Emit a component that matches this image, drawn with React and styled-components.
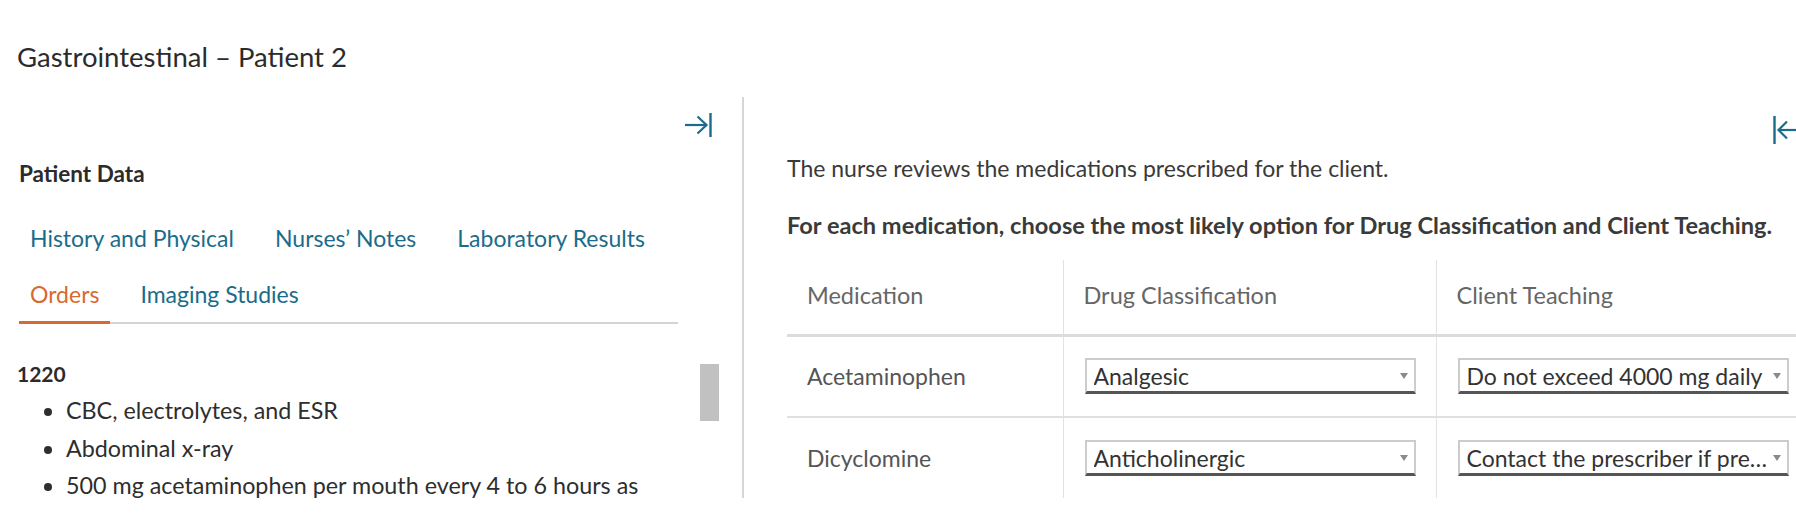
import React from "react";
import styled, { createGlobalStyle } from "styled-components";

const GlobalStyle = createGlobalStyle`
  html, body {
    margin: 0;
    padding: 0;
    background: #ffffff;
  }
  body {
    font-family: Lato, "Open Sans", "Liberation Sans", sans-serif;
    color: #2e2e2e;
  }
  * {
    box-sizing: border-box;
  }
`;

const teal = "#1b6c8b";
const orange = "#d76a2e";

const tabs = [
  { label: "History and Physical" },
  { label: "Nurses\u2019 Notes" },
  { label: "Laboratory Results" },
  { label: "Orders", active: true },
  { label: "Imaging Studies" },
];

const orders = [
  "CBC, electrolytes, and ESR",
  "Abdominal x-ray",
  "500 mg acetaminophen per mouth every 4 to 6 hours as needed for pain",
];

const medications = [
  { name: "Acetaminophen", drug: "Analgesic", teaching: "Do not exceed 4000 mg daily" },
  {
    name: "Dicyclomine",
    drug: "Anticholinergic",
    teaching: "Contact the prescriber if pregnant or breastfeeding",
  },
];

const ExpandIcon = () => (
  <svg width="28" height="26" viewBox="0 0 28 26" fill="none">
    <path d="M1 13 H23" stroke={teal} strokeWidth="2.2" />
    <path d="M13.5 4.5 L22.5 13 L13.5 21.5" stroke={teal} strokeWidth="2.2" />
    <path d="M26.5 1 V25" stroke={teal} strokeWidth="2.4" />
  </svg>
);

const CollapseIcon = () => (
  <svg width="28" height="30" viewBox="0 0 28 30" fill="none">
    <path d="M1.5 1 V29" stroke={teal} strokeWidth="2.4" />
    <path d="M5 15 H28" stroke={teal} strokeWidth="2.2" />
    <path d="M14 6.5 L5.5 15 L14 23.5" stroke={teal} strokeWidth="2.2" />
  </svg>
);

export default function App() {
  return (
    <>
      <GlobalStyle />
      <Page>
        <Title>Gastrointestinal – Patient 2</Title>
        <Columns>
          <LeftPanel>
            <PanelTop>
              <IconButton aria-label="Expand">
                <ExpandIcon />
              </IconButton>
            </PanelTop>
            <SectionTitle>Patient Data</SectionTitle>
            <TabList>
              {tabs.map((t) => (
                <Tab key={t.label} $active={t.active}>
                  {t.label}
                </Tab>
              ))}
            </TabList>
            <OrdersBody>
              <Time>1220</Time>
              <Bullets>
                {orders.map((o) => (
                  <li key={o}>{o}</li>
                ))}
              </Bullets>
            </OrdersBody>
            <ScrollThumb />
          </LeftPanel>

          <RightPanel>
            <PanelTopRight>
              <IconButton aria-label="Collapse">
                <CollapseIcon />
              </IconButton>
            </PanelTopRight>
            <Intro>The nurse reviews the medications prescribed for the client.</Intro>
            <Instruction>
              For each medication, choose the most likely option for Drug Classification and
              Client Teaching.
            </Instruction>
            <MedTable>
              <colgroup>
                <col style={{ width: 276 }} />
                <col style={{ width: 373 }} />
                <col style={{ width: 373 }} />
              </colgroup>
              <thead>
                <tr>
                  <HeadCell>Medication</HeadCell>
                  <HeadCell $divider>Drug Classification</HeadCell>
                  <HeadCell $divider>Client Teaching</HeadCell>
                </tr>
              </thead>
              <tbody>
                {medications.map((m, i) => (
                  <BodyRow key={m.name} $last={i === medications.length - 1}>
                    <NameCell>{m.name}</NameCell>
                    <SelectCell $divider>
                      <SelectBox>
                        <SelectValue>{m.drug}</SelectValue>
                        <Caret />
                      </SelectBox>
                    </SelectCell>
                    <SelectCell $divider>
                      <SelectBox>
                        <SelectValue>{m.teaching}</SelectValue>
                        <Caret />
                      </SelectBox>
                    </SelectCell>
                  </BodyRow>
                ))}
              </tbody>
            </MedTable>
          </RightPanel>
        </Columns>
      </Page>
    </>
  );
}

const Page = styled.div`
  width: 1796px;
  height: 517px;
  overflow: hidden;
`;

const Title = styled.h1`
  margin: 0;
  padding: 42px 0 0 17px;
  font-size: 27.5px;
  line-height: 30px;
  font-weight: 400;
  color: #2b2b2b;
`;

const Columns = styled.div`
  display: grid;
  grid-template-columns: 744px 1fr;
  margin-top: 25px;
`;

const LeftPanel = styled.section`
  position: relative;
  height: 401px;
  border-right: 2px solid #d6d6d6;
  overflow: hidden;
`;

const PanelTop = styled.div`
  display: flex;
  justify-content: flex-end;
  padding: 15px 30px 0 0;
`;

const IconButton = styled.button`
  display: flex;
  padding: 0;
  border: 0;
  background: none;
  cursor: pointer;
`;

const SectionTitle = styled.h2`
  margin: 24px 0 0 19px;
  font-size: 22.5px;
  line-height: 24px;
  font-weight: 700;
  color: #2b2b2b;
`;

const TabList = styled.div`
  display: flex;
  flex-wrap: wrap;
  column-gap: 19px;
  width: 659px;
  margin: 24px 0 0 19px;
  border-bottom: 2px solid #d4d4d4;
`;

const Tab = styled.div`
  padding: 16px 11px 15px;
  font-size: 23px;
  line-height: 24px;
  color: ${(p) => (p.$active ? orange : teal)};
  border-bottom: 3px solid ${(p) => (p.$active ? orange : "transparent")};
  margin-bottom: -2px;
  cursor: pointer;
`;

const OrdersBody = styled.div`
  padding: 37px 40px 0 17px;
`;

const Time = styled.div`
  font-size: 21px;
  line-height: 26px;
  font-weight: 700;
  color: #2b2b2b;
`;

const Bullets = styled.ul`
  margin: 5px 0 0;
  padding-left: 49px;
  font-size: 23.3px;
  line-height: 37.5px;
  color: #2e2e2e;
`;

const ScrollThumb = styled.div`
  position: absolute;
  left: 700px;
  top: 267px;
  width: 19px;
  height: 57px;
  background: #c1c1c1;
`;

const RightPanel = styled.section`
  padding-left: 43px;
  overflow: hidden;
  height: 420px;
`;

const PanelTopRight = styled.div`
  display: flex;
  justify-content: flex-end;
  padding-top: 18px;
  margin-right: -5px;
`;

const Intro = styled.p`
  margin: 9px 0 0;
  font-size: 23px;
  line-height: 28px;
  color: #3a3a3a;
`;

const Instruction = styled.p`
  margin: 29px 0 0;
  font-size: 23.6px;
  line-height: 28px;
  font-weight: 700;
  color: #3a3a3a;
  white-space: nowrap;
`;

const MedTable = styled.table`
  margin-top: 21px;
  width: 1022px;
  border-collapse: collapse;
  table-layout: fixed;
`;

const HeadCell = styled.th`
  height: 75px;
  padding: 0 20px 4px;
  text-align: left;
  font-size: 23.5px;
  font-weight: 400;
  color: #666666;
  border-bottom: 3px solid #dcdcdc;
  border-left: ${(p) => (p.$divider ? "1px solid #e2e2e2" : "0")};
`;

const BodyRow = styled.tr`
  height: ${(p) => (p.$last ? "81px" : "82px")};
  border-bottom: ${(p) => (p.$last ? "0" : "2px solid #e0e0e0")};
`;

const NameCell = styled.td`
  padding: 0 20px;
  font-size: 23px;
  color: #555555;
`;

const SelectCell = styled.td`
  padding: 0 0 0 21px;
  border-left: ${(p) => (p.$divider ? "1px solid #e2e2e2" : "0")};
`;

const SelectBox = styled.div`
  display: flex;
  align-items: center;
  width: 331px;
  height: 36px;
  padding: 0 6px 0 7px;
  border: 2px solid #cccccc;
  border-bottom: 3px solid #555555;
  background: #ffffff;
  cursor: pointer;
`;

const SelectValue = styled.span`
  flex: 1;
  min-width: 0;
  overflow: hidden;
  white-space: nowrap;
  text-overflow: ellipsis;
  font-size: 23px;
  line-height: 30px;
  color: #333333;
`;

const Caret = styled.span`
  flex: none;
  margin-left: 4px;
  width: 0;
  height: 0;
  border-left: 4.5px solid transparent;
  border-right: 4.5px solid transparent;
  border-top: 6px solid #8a8a8a;
`;
